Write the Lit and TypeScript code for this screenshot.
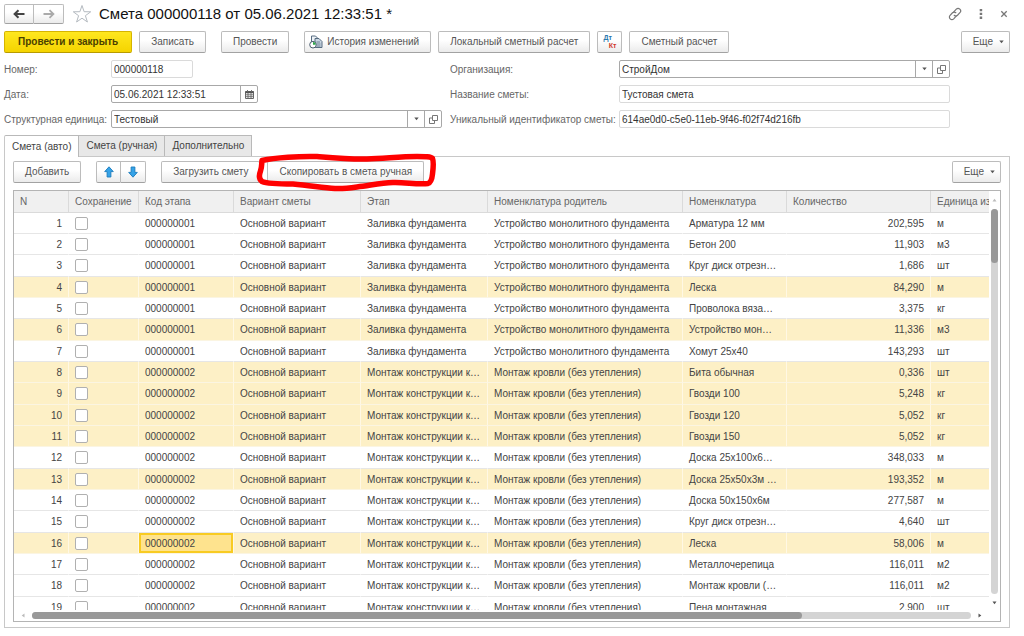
import { LitElement, html, css, svg } from "lit";
import { customElement, state } from "lit/decorators.js";
import { classMap } from "lit/directives/class-map.js";

interface Row {
  code: string;
  stage: string;
  parent: string;
  item: string;
  qty: string;
  unit: string;
  marked?: boolean;
}

const FOUNDATION = {
  code: "000000001",
  stage: "Заливка фундамента",
  parent: "Устройство монолитного фундамента",
};
const ROOF = {
  code: "000000002",
  stage: "Монтаж конструкции к…",
  parent: "Монтаж кровли (без утепления)",
};

const ROWS: Row[] = [
  { ...FOUNDATION, item: "Арматура 12 мм", qty: "202,595", unit: "м" },
  { ...FOUNDATION, item: "Бетон 200", qty: "11,903", unit: "м3" },
  { ...FOUNDATION, item: "Круг диск отрезн…", qty: "1,686", unit: "шт" },
  { ...FOUNDATION, item: "Леска", qty: "84,290", unit: "м", marked: true },
  { ...FOUNDATION, item: "Проволока вяза…", qty: "3,375", unit: "кг" },
  { ...FOUNDATION, item: "Устройство мон…", qty: "11,336", unit: "м3", marked: true },
  { ...FOUNDATION, item: "Хомут 25х40", qty: "143,293", unit: "шт" },
  { ...ROOF, item: "Бита обычная", qty: "0,336", unit: "шт", marked: true },
  { ...ROOF, item: "Гвозди 100", qty: "5,248", unit: "кг", marked: true },
  { ...ROOF, item: "Гвозди 120", qty: "5,052", unit: "кг", marked: true },
  { ...ROOF, item: "Гвозди 150", qty: "5,052", unit: "кг", marked: true },
  { ...ROOF, item: "Доска 25х100х6…", qty: "348,033", unit: "м" },
  { ...ROOF, item: "Доска 25х50х3м …", qty: "193,352", unit: "м", marked: true },
  { ...ROOF, item: "Доска 50х150х6м", qty: "277,587", unit: "м" },
  { ...ROOF, item: "Круг диск отрезн…", qty: "4,640", unit: "шт" },
  { ...ROOF, item: "Леска", qty: "58,006", unit: "м", marked: true },
  { ...ROOF, item: "Металлочерепица", qty: "116,011", unit: "м2" },
  { ...ROOF, item: "Монтаж кровли (…", qty: "116,011", unit: "м2" },
  { ...ROOF, item: "Пена монтажная", qty: "2,900", unit: "шт" },
];

const TABS = ["Смета (авто)", "Смета (ручная)", "Дополнительно"];

const backIcon = svg`<svg width="12" height="10" viewBox="0 0 12 10"><path d="M11.500 5H2M5.500 1.200 1.600 5l3.900 3.800" fill="none" stroke="currentColor" stroke-width="2"/></svg>`;
const forwardIcon = svg`<svg width="12" height="10" viewBox="0 0 12 10"><path d="M.5 5H10M6.500 1.200 10.400 5 6.500 8.800" fill="none" stroke="currentColor" stroke-width="1.800"/></svg>`;
const starIcon = svg`<svg width="20" height="20" viewBox="0 0 20 20"><path d="M10 1.500 12.100 7.700 18.700 7.800 13.400 11.700 15.400 18 10 14.200 4.600 18 6.600 11.700 1.300 7.800 7.900 7.700Z" fill="#fff" stroke="#b4bac0" stroke-width="1"/></svg>`;
const linkIcon = svg`<svg width="14" height="14" viewBox="0 0 14 14"><g fill="none" stroke="#777" stroke-width="1.200" stroke-linecap="round"><path d="M5.800 4.900 8.300 2.200a2.500 2.500 0 0 1 3.600 3.500L9.500 8.200a2.500 2.500 0 0 1-3.300.1"/><path d="M8.200 9.100 5.700 11.800a2.500 2.500 0 0 1-3.600-3.500L4.500 5.800a2.500 2.500 0 0 1 3.300-.1"/></g></svg>`;
const dotsIcon = svg`<svg width="4" height="12" viewBox="0 0 4 12"><path d="M.7 1h2.500v2.300H.7zM.7 4.800h2.500v2.300H.7zM.7 8.600h2.500v2.300H.7z" fill="#777"/></svg>`;
const closeIcon = svg`<svg width="8" height="8" viewBox="0 0 8 8"><path d="M1.300 1.300 6.700 6.700M6.700 1.300 1.300 6.700" stroke="#777" stroke-width="1.300"/></svg>`;
const caretIcon = svg`<svg width="5" height="4" viewBox="0 0 5 4"><path d="M.3.500h4.400L2.500 3.300z" fill="#555"/></svg>`;
const openIcon = svg`<svg width="9" height="9" viewBox="0 0 9 9"><path d="M3.500.5h5v5h-5zM3.500 3h-3v5.500h5V5.500" fill="none" stroke="#777" stroke-width="1"/></svg>`;
const calendarIcon = svg`<svg width="9" height="9" viewBox="0 0 9 9"><path d="M.5 1.500h8v7h-8z" fill="none" stroke="#666"/><path d="M.5 1.200h8v2h-8z" fill="#555"/><path d="M2.500 0v2M6.500 0v2M3 3v5.500M6 3v5.500M.5 4.800h8M.5 6.700h8" stroke="#666" stroke-width=".9"/></svg>`;
const historyIcon = svg`<svg width="14" height="14" viewBox="0 0 14 14"><path d="M2.500 1h4l2 2v7h-6z" fill="#eef2f6" stroke="#566b80"/><path d="M6 3.500h4l3 3V12.500H6z" fill="#c9d6e2" stroke="#566b80"/><path d="M7.500 7h3.500M7.500 9h4M7.500 11h4" stroke="#566b80" stroke-width=".8"/><circle cx="4" cy="9.700" r="3.300" fill="#fff" stroke="#4a5c6e"/><path d="M4 9.700V6.900a2.800 2.800 0 0 1 2.800 2.800z" fill="#2fa74a"/></svg>`;
const arrowUpIcon = svg`<svg width="10" height="12" viewBox="0 0 10 12"><path d="M5 .8 9.300 5.600H6.900V11H3.100V5.600H.7Z" fill="#35a3e8" stroke="#1c7cbc" stroke-width=".9" stroke-linejoin="round"/></svg>`;
const arrowDownIcon = svg`<svg width="10" height="12" viewBox="0 0 10 12"><path d="M5 11.200 9.300 6.400H6.900V1H3.100V6.400H.7Z" fill="#35a3e8" stroke="#1c7cbc" stroke-width=".9" stroke-linejoin="round"/></svg>`;

@customElement("app-root")
export class AppRoot extends LitElement {
  @state() private activeTab = 0;
  @state() private selectedRow = 15;

  static styles = css`
    :host {
      display: block;
      font-family: "Liberation Sans", Arial, sans-serif;
      font-size: 10px;
      line-height: 14px;
      color: #444;
      background: #fff;
    }
    * {
      box-sizing: border-box;
    }
    svg {
      display: block;
      flex: none;
    }
    .page {
      display: flex;
      flex-direction: column;
      height: 100vh;
      min-height: 320px;
      padding: 4px 14px 8px 4px;
    }
    button {
      font: inherit;
      color: #555;
      margin: 0;
      padding: 0;
      border: 0;
      background: none;
      white-space: nowrap;
      display: flex;
      align-items: center;
      justify-content: center;
    }
    .btn {
      height: 22px;
      padding: 0 11px;
      gap: 5px;
      border: 1px solid #bcbcbc;
      border-bottom-color: #a2a2a2;
      border-radius: 2px;
      background: linear-gradient(#fff 40%, #ebebeb);
    }
    .primary {
      padding: 0 13px;
      font-weight: bold;
      color: #4a4000;
      background: linear-gradient(#ffe71f, #f5d400);
      border-color: #d5b400;
      border-bottom-color: #b89b00;
    }
    .history {
      gap: 4px;
      padding-left: 4px;
    }
    .more {
      gap: 6px;
      padding-right: 5px;
    }
    .square {
      padding: 0 5px;
    }
    .pair {
      display: flex;
    }
    .pair .btn {
      width: 25px;
      padding: 0;
    }
    .pair .btn:first-child {
      border-radius: 2px 0 0 2px;
    }
    .pair .btn:last-child {
      border-left: 0;
      border-radius: 0 2px 2px 0;
    }
    .titlebar {
      display: flex;
      align-items: center;
      height: 20px;
    }
    .titlebar .pair .btn {
      width: 30px;
      height: 20px;
      color: #444;
    }
    .titlebar .pair .btn:last-child {
      color: #aaa;
    }
    .star {
      margin: 0 7px 0 8px;
    }
    h1 {
      margin: 0;
      flex: 1;
      font-size: 15px;
      line-height: 20px;
      font-weight: normal;
      color: #111;
      white-space: nowrap;
    }
    .window-tools {
      display: flex;
      align-items: center;
      gap: 17px;
      padding-right: 2px;
    }
    .bar {
      display: flex;
      gap: 15px;
      margin-top: 7px;
    }
    .group {
      display: flex;
      gap: 7px;
    }
    .spacer {
      flex: 1;
    }
    .dtkt {
      display: grid;
      width: 13px;
      font-size: 7px;
      line-height: 8px;
      font-weight: bold;
      color: #2a78ad;
      text-align: left;
    }
    .kt {
      color: #d0392b;
      text-align: right;
    }
    .form {
      display: grid;
      grid-template-columns: 438fr 500fr;
      gap: 7px 8px;
      margin: 7px 60px 0 0;
    }
    .field {
      display: flex;
      align-items: center;
    }
    label {
      width: 107px;
      flex: none;
      padding-top: 2px;
      color: #666;
      white-space: nowrap;
    }
    .wide label {
      width: 169px;
    }
    .control {
      display: flex;
      flex: 1;
      height: 18px;
      border: 1px solid #a8a8a8;
      border-radius: 2px;
      background: #fff;
    }
    .readonly {
      border-color: #dadada;
    }
    .short {
      flex: none;
      width: 82px;
    }
    .date {
      flex: none;
      width: 147px;
    }
    .control input {
      flex: 1;
      min-width: 0;
      width: 0;
      border: 0;
      outline: 0;
      padding: 2px 2px 0;
      font: inherit;
      color: #333;
      background: none;
    }
    .control button {
      width: 17px;
      border-left: 1px solid #a8a8a8;
    }
    .tabs {
      display: flex;
      margin-top: 7px;
    }
    .tab {
      height: 21px;
      padding: 0 7px;
      border: 1px solid #b9b9b9;
      border-left: 0;
      border-bottom: 0;
      background: #e8e8e8;
      color: #444;
    }
    .tab:first-child {
      border-left: 1px solid #c8c8c8;
      border-radius: 2px 0 0 0;
    }
    .active {
      position: relative;
      height: 22px;
      margin-bottom: -1px;
      background: #fff;
    }
    .panel {
      flex: 1;
      min-height: 0;
      display: flex;
      flex-direction: column;
      border: 1px solid #c8c8c8;
      padding: 4px 8px 5px;
    }
    .tools {
      display: flex;
      gap: 15px;
      margin-bottom: 7px;
    }
    .marked-button {
      position: relative;
    }
    .scribble {
      position: absolute;
      left: -11px;
      top: -9px;
    }
    .grid {
      flex: 1;
      min-height: 0;
      display: grid;
      grid-template-columns: minmax(0, 1fr) 11px;
      grid-template-rows: minmax(0, 1fr) 11px;
      border: 1px solid #b4b4b4;
    }
    .viewport {
      overflow: hidden;
    }
    table {
      width: 100%;
      table-layout: fixed;
      border-collapse: separate;
      border-spacing: 0;
    }
    .c-n { width: 55px; }
    .c-save { width: 70px; }
    .c-code { width: 95px; }
    .c-stage { width: 127px; }
    .c-parent { width: 195px; }
    .c-item { width: 104px; }
    .c-qty { width: 144px; }
    th,
    td {
      padding: 1px 6px 0;
      text-align: left;
      font-weight: normal;
      white-space: nowrap;
      overflow: hidden;
      height: 21px;
      border-right: 1px solid transparent;
      border-bottom: 1px solid #e6e6e6;
    }
    th {
      height: 22px;
      padding-top: 0;
      color: #666;
      background: #f0f0f0;
      border-right-color: #dadada;
      border-bottom-color: #dadada;
    }
    tr:nth-child(3n) td {
      height: 22px;
    }
    .num {
      text-align: right;
    }
    .hl td {
      background: #fdf0c6;
      border-right-color: #fff8e4;
      border-bottom-color: #fbf5e2;
    }
    th:last-child,
    td:last-child {
      padding-right: 0;
      border-right: 0;
    }
    .hl .selected {
      background: #fee38e;
      box-shadow: inset 0 0 0 2px #f8cb22;
    }
    .tick {
      appearance: none;
      display: block;
      width: 13px;
      height: 13px;
      margin: 0;
      border: 1px solid #b0b0b0;
      border-radius: 2px;
      background: #fff;
    }
    .check {
      padding-top: 0;
    }
    .tick:checked {
      background: #777;
    }
    .vbar {
      display: flex;
      flex-direction: column;
      align-items: center;
      padding: 7px 0 5px;
      gap: 7px;
    }
    .hbar {
      display: flex;
      align-items: center;
      padding: 0 7px;
      gap: 7px;
    }
    .track {
      flex: 1;
      border-radius: 4px;
      background: #d4d4d4;
    }
    .vbar .track {
      width: 7px;
    }
    .hbar .track {
      height: 7px;
    }
    .thumb {
      border-radius: 4px;
      background: #999;
    }
    .vbar .thumb {
      height: 14%;
    }
    .hbar .thumb {
      height: 7px;
      width: 82%;
    }
  `;

  private more() {
    return html`<button class="btn more">Еще ${caretIcon}</button>`;
  }

  private openButtons() {
    return html`<button aria-label="Выбрать">${caretIcon}</button
      ><button aria-label="Открыть">${openIcon}</button>`;
  }

  private row(r: Row, i: number) {
    const selected = i === this.selectedRow;
    return html`<tr class=${classMap({ hl: !!r.marked })} @click=${() => (this.selectedRow = i)}>
      <td class="num">${i + 1}</td>
      <td class="check"><input class="tick" type="checkbox" aria-label="Сохранение" /></td>
      <td class=${classMap({ selected })}>${r.code}</td>
      <td>Основной вариант</td>
      <td>${r.stage}</td>
      <td>${r.parent}</td>
      <td>${r.item}</td>
      <td class="num">${r.qty}</td>
      <td>${r.unit}</td>
    </tr>`;
  }

  render() {
    return html`<div class="page">
      <header class="titlebar">
        <div class="pair">
          <button class="btn" aria-label="Назад">${backIcon}</button>
          <button class="btn" aria-label="Вперед">${forwardIcon}</button>
        </div>
        <button class="star" aria-label="В избранное">${starIcon}</button>
        <h1>Смета 000000118 от 05.06.2021 12:33:51 *</h1>
        <div class="window-tools">
          <button aria-label="Ссылка">${linkIcon}</button>
          <button aria-label="Меню">${dotsIcon}</button>
          <button aria-label="Закрыть">${closeIcon}</button>
        </div>
      </header>

      <div class="bar">
        <div class="group">
          <button class="btn primary">Провести и закрыть</button>
          <button class="btn">Записать</button>
        </div>
        <button class="btn">Провести</button>
        <div class="group">
          <button class="btn history">${historyIcon}История изменений</button>
          <button class="btn">Локальный сметный расчет</button>
          <button class="btn square">
            <span class="dtkt"><span>Дт</span><span class="kt">Кт</span></span>
          </button>
          <button class="btn">Сметный расчет</button>
        </div>
        <div class="spacer"></div>
        ${this.more()}
      </div>

      <div class="form">
        <div class="field">
          <label for="number">Номер:</label>
          <div class="control readonly short"><input id="number" value="000000118" /></div>
        </div>
        <div class="field wide">
          <label for="org">Организация:</label>
          <div class="control"><input id="org" value="СтройДом" />${this.openButtons()}</div>
        </div>
        <div class="field">
          <label for="date">Дата:</label>
          <div class="control date">
            <input id="date" value="05.06.2021 12:33:51" />
            <button aria-label="Календарь">${calendarIcon}</button>
          </div>
        </div>
        <div class="field wide">
          <label for="name">Название сметы:</label>
          <div class="control readonly"><input id="name" value="Тустовая смета" /></div>
        </div>
        <div class="field">
          <label for="unit">Структурная единица:</label>
          <div class="control"><input id="unit" value="Тестовый" />${this.openButtons()}</div>
        </div>
        <div class="field wide">
          <label for="uid">Уникальный идентификатор сметы:</label>
          <div class="control readonly">
            <input id="uid" value="614ae0d0-c5e0-11eb-9f46-f02f74d216fb" />
          </div>
        </div>
      </div>

      <div class="tabs" role="tablist">
        ${TABS.map(
          (t, i) => html`<button
            role="tab"
            class=${classMap({ tab: true, active: i === this.activeTab })}
            @click=${() => (this.activeTab = i)}
          >${t}</button>`
        )}
      </div>

      <section class="panel">
        <div class="tools">
          <button class="btn">Добавить</button>
          <div class="pair">
            <button class="btn" aria-label="Вверх">${arrowUpIcon}</button>
            <button class="btn" aria-label="Вниз">${arrowDownIcon}</button>
          </div>
          <div class="group">
            <button class="btn">Загрузить смету</button>
            <div class="marked-button">
              <button class="btn">Скопировать в смета ручная</button>
              <svg class="scribble" width="182" height="40" viewBox="256 152 182 40">
                <path
                  d="M262 160.500C275 157.500 300 156 317 156.500C335 158 352 159.500 367 159C385 158.500 400 156.500 417 156.500C425 156.500 431 156.500 432.500 158.500C434 162 433 170 432.500 174C432 179 431 182.500 428 183.500C418 185 405 182 393 182.500C380 183 370 185.500 357 187C350 188 342 189 335 188.500C322 187.500 310 185.500 293 184C280 184 268 184 262 181.500C258.500 179 259 175 260.500 171C262 167 261.500 164 262 160.500Z"
                  fill="none" stroke="#f00" stroke-width="5.500" stroke-linejoin="round"
                />
              </svg>
            </div>
          </div>
          <div class="spacer"></div>
          ${this.more()}
        </div>

        <div class="grid">
          <div class="viewport">
            <table>
              <colgroup>
                <col class="c-n" /><col class="c-save" /><col class="c-code" />
                <col class="c-stage" /><col class="c-stage" /><col class="c-parent" />
                <col class="c-item" /><col class="c-qty" /><col />
              </colgroup>
              <thead>
                <tr>
                  <th>N</th>
                  <th>Сохранение</th>
                  <th>Код этапа</th>
                  <th>Вариант сметы</th>
                  <th>Этап</th>
                  <th>Номенклатура родитель</th>
                  <th>Номенклатура</th>
                  <th>Количество</th>
                  <th>Единица из</th>
                </tr>
              </thead>
              <tbody>
                ${ROWS.map((r, i) => this.row(r, i))}
              </tbody>
            </table>
          </div>
          <div class="vbar">
            <svg width="5" height="4" viewBox="0 0 5 4"><path d="M.5 3.500h4L2.500.7z" fill="#bbb" /></svg>
            <div class="track"><div class="thumb"></div></div>
            <svg width="5" height="4" viewBox="0 0 5 4"><path d="M.5.5h4L2.500 3.300z" fill="#555" /></svg>
          </div>
          <div class="hbar">
            <svg width="4" height="5" viewBox="0 0 4 5"><path d="M3.500.5v4L.7 2.500z" fill="#bbb" /></svg>
            <div class="track"><div class="thumb"></div></div>
            <svg width="4" height="5" viewBox="0 0 4 5"><path d="M.5.5v4L3.300 2.500z" fill="#555" /></svg>
          </div>
          <div></div>
        </div>
      </section>
    </div>`;
  }
}
